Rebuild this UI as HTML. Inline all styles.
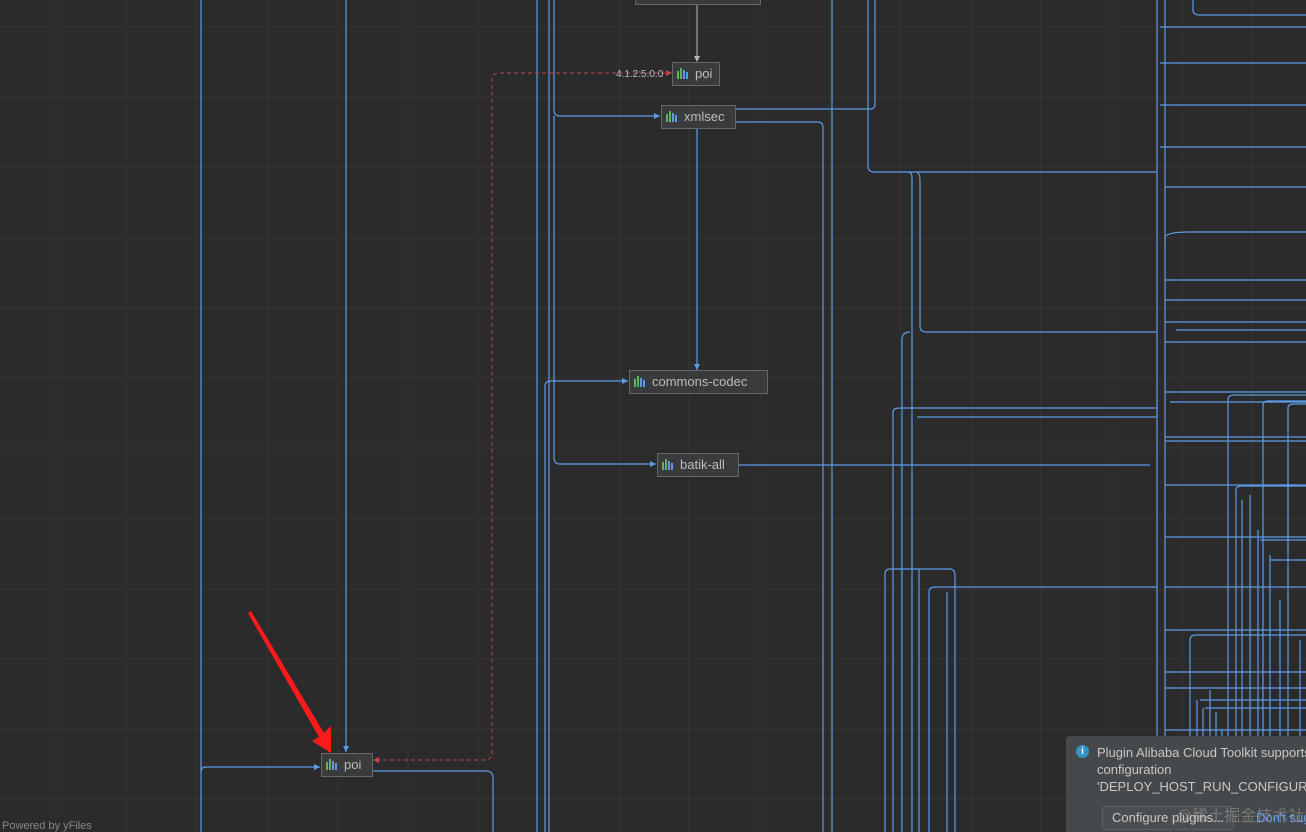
<!DOCTYPE html>
<html><head><meta charset="utf-8"><style>
html,body{margin:0;padding:0;background:#2b2b2b;width:1306px;height:832px;overflow:hidden;font-family:"Liberation Sans",sans-serif}
svg{position:absolute;left:0;top:0}
.node{position:absolute;background:#3a3b3c;border:1px solid #646667;color:#bcbcbc;font-size:13px;box-sizing:border-box;height:24px;line-height:22px;white-space:nowrap}
.node i{position:absolute;left:4px;top:5px;width:13px;height:11px}
.node span{position:absolute;left:22px}
.notif{position:absolute;left:1066px;top:736px;width:260px;height:96px;background:#46494b;border-radius:4px 0 0 0;color:#c8c8c8;font-size:13px;overflow:hidden}
.btn{position:absolute;left:36px;top:70px;width:132px;height:24px;border:1px solid #5e6163;border-radius:3px;box-sizing:border-box;background:#4b4e50;line-height:22px;text-align:center}
</style></head><body>
<svg width="1306" height="832" xmlns="http://www.w3.org/2000/svg">
<g stroke="#363636" stroke-width="1">
<path d="M56 0V832M126 0V832M197 0V832M267 0V832M338 0V832M408 0V832M478 0V832M549 0V832M619 0V832M689 0V832M760 0V832M830 0V832M900 0V832M971 0V832M1041 0V832M1112 0V832M1182 0V832M1252 0V832"/>
<path d="M0 27H1306M0 97H1306M0 167H1306M0 238H1306M0 308H1306M0 378H1306M0 448H1306M0 518H1306M0 589H1306M0 659H1306M0 729H1306M0 799H1306"/>
</g>
<g fill="none" stroke="#5b9be8" stroke-width="1.2">
<path d="M201 0V832"/>
<path d="M346 0V752"/>
<path d="M201 772Q201 767 206 767H320"/>
<path d="M373 771H486Q493 771 493 778V832"/>
<path d="M537 0V832"/>
<path d="M549 0V832"/>
<path d="M554 0V110Q554 116 560 116H660"/>
<path d="M554 116V458Q554 464 560 464H656"/>
<path d="M545 832V386Q545 381 551 381H628"/>
<path d="M697 128V370"/>
<path d="M738 465H1150"/>
<path d="M735 109H870Q875 109 875 104V0"/>
<path d="M735 122H818Q823 122 823 128V832"/>
<path d="M832 0V832"/>
<path d="M868 0V166Q868 172 874 172H1157"/>
<path d="M908 172Q912 172 912 178V832"/>
<path d="M917 172Q920 174 920 180V326Q920 332 926 332H1157"/>
<path d="M910 332Q902 332 902 340V832"/>
<path d="M893 832V412Q893 408 900 408H1157"/>
<path d="M917 417H1157"/>
<path d="M885 832V574Q885 569 890 569H950Q955 569 955 576V832"/>
<path d="M929 832V592Q929 587 935 587H1157"/>
<path d="M919 832V569"/>
<path d="M947 832V592"/>
<path d="M1157 0V832M1165 0V832"/>
<path d="M1193 0V10Q1193 15 1200 15H1306"/>
<path d="M1160 27H1306M1160 63H1306M1160 105H1306M1160 147H1306M1165 187H1306"/>
<path d="M1165 246V238Q1165 232 1190 232H1306"/>
<path d="M1165 280H1306M1165 300H1306M1165 322H1306M1176 330H1306M1165 342H1306"/>
<path d="M1165 392H1306M1170 402H1306"/>
<path d="M1165 437H1306M1165 441H1306M1165 485H1306M1165 537H1306M1165 587H1306M1165 630H1306M1165 672H1306M1165 688H1306M1165 730H1306"/>
<path d="M1228 832V400Q1228 395 1234 395H1306"/>
<path d="M1263 832V405Q1263 401 1269 401H1306"/>
<path d="M1288 832V408Q1288 404 1294 404H1306"/>
<path d="M1236 832V490Q1236 486 1242 486H1306"/>
<path d="M1250 832V495M1270 832V555M1280 832V600M1300 832V640M1242 832V500M1258 832V530"/>
<path d="M1190 832V640Q1190 635 1196 635H1306"/>
<path d="M1197 832V700M1203 832V708M1210 832V690M1216 832V712M1222 832V730"/>
<path d="M1200 700H1306M1205 708H1306M1260 540H1306M1270 560H1306"/>
</g>
<path d="M697 5V60" stroke="#b8b8b8" stroke-width="1"/>
<path d="M672 73H500Q492 73 492 80V752Q492 760 484 760H375" fill="none" stroke="#c0464a" stroke-width="1" stroke-dasharray="4,3"/>
<g fill="#5b9be8"><path d="M320 767l-6-3v6z"/><path d="M660 116l-6-3v6z"/><path d="M656 464l-6-3v6z"/><path d="M628 381l-6-3v6z"/><path d="M697 370l-3-6h6z"/><path d="M346 752l-3-6h6z"/></g>
<path d="M697 62l-3-6h6z" fill="#b8b8b8"/>
<path d="M672 73l-6-3v6z" fill="#c0464a"/><path d="M373 760l6-3v6z" fill="#c0464a"/>
<text x="616" y="77" fill="#bbbbbb" font-size="10" font-family="Liberation Sans">4.1.2:5.0.0</text>
<polygon points="248,613 251,611 324,733 331,726 331,753 312,741 319,737" fill="#ff1a1a"/>
<text x="2" y="829" fill="#888" font-size="11" font-family="Liberation Sans">Powered by yFiles</text>
</svg>
<div class="node" style="left:635px;top:-19px;width:126px"></div>
<div class="node" style="left:672px;top:62px;width:48px"><i><svg width="13" height="11"><rect x="0" y="3" width="2" height="8" fill="#5fb35f"/><rect x="3" y="0" width="2" height="11" fill="#5fb35f"/><rect x="6" y="2" width="2" height="9" fill="#5b9be8"/><rect x="9" y="4" width="2" height="7" fill="#5b9be8"/></svg></i><span>poi</span></div>
<div class="node" style="left:661px;top:105px;width:75px"><i><svg width="13" height="11"><rect x="0" y="3" width="2" height="8" fill="#5fb35f"/><rect x="3" y="0" width="2" height="11" fill="#5fb35f"/><rect x="6" y="2" width="2" height="9" fill="#5b9be8"/><rect x="9" y="4" width="2" height="7" fill="#5b9be8"/></svg></i><span>xmlsec</span></div>
<div class="node" style="left:629px;top:370px;width:139px"><i><svg width="13" height="11"><rect x="0" y="3" width="2" height="8" fill="#5fb35f"/><rect x="3" y="0" width="2" height="11" fill="#5fb35f"/><rect x="6" y="2" width="2" height="9" fill="#5b9be8"/><rect x="9" y="4" width="2" height="7" fill="#5b9be8"/></svg></i><span>commons-codec</span></div>
<div class="node" style="left:657px;top:453px;width:82px"><i><svg width="13" height="11"><rect x="0" y="3" width="2" height="8" fill="#5fb35f"/><rect x="3" y="0" width="2" height="11" fill="#5fb35f"/><rect x="6" y="2" width="2" height="9" fill="#5b9be8"/><rect x="9" y="4" width="2" height="7" fill="#5b9be8"/></svg></i><span>batik-all</span></div>
<div class="node" style="left:321px;top:753px;width:52px"><i><svg width="13" height="11"><rect x="0" y="3" width="2" height="8" fill="#5fb35f"/><rect x="3" y="0" width="2" height="11" fill="#5fb35f"/><rect x="6" y="2" width="2" height="9" fill="#5b9be8"/><rect x="9" y="4" width="2" height="7" fill="#5b9be8"/></svg></i><span>poi</span></div>
<div class="notif">
<div style="position:absolute;left:10px;top:9px;width:13px;height:13px;border-radius:50%;background:#3592c4;color:#fff;font-size:10px;font-weight:bold;text-align:center;line-height:13px">i</div>
<div style="position:absolute;left:31px;top:8px;line-height:17px;white-space:nowrap">Plugin Alibaba Cloud Toolkit supports<br>configuration<br>'DEPLOY_HOST_RUN_CONFIGURATION'</div>
<div class="btn">Configure plugins...</div>
<div style="position:absolute;left:190px;top:74px;color:#589df6;white-space:nowrap">Don't suggest</div>
<div style="position:absolute;left:110px;top:66px;color:rgba(200,200,200,0.35);font-size:16px;font-family:'Liberation Sans','Noto Sans CJK SC',sans-serif;white-space:nowrap">@稀土掘金技术社区</div>
</div>
</body></html>
